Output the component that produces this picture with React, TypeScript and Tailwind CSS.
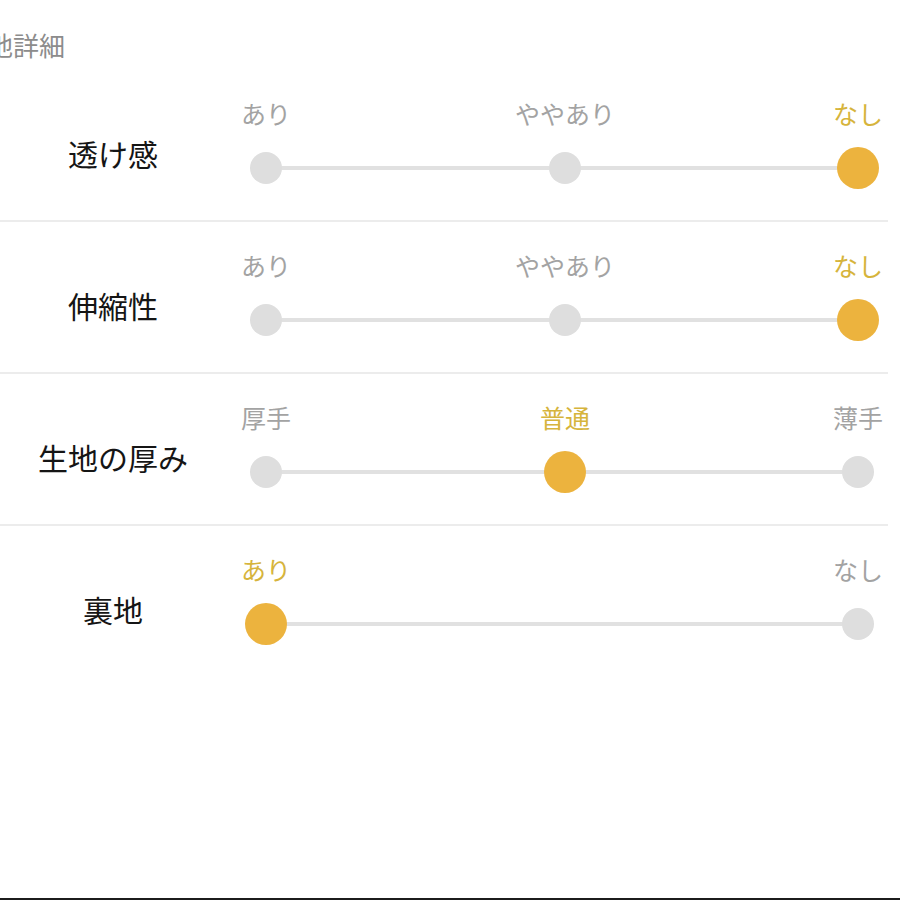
import React from "react";

type Row = { label: string; options: string[]; active: number };

const rows: Row[] = [
  { label: "透け感", options: ["あり", "ややあり", "なし"], active: 2 },
  { label: "伸縮性", options: ["あり", "ややあり", "なし"], active: 2 },
  { label: "生地の厚み", options: ["厚手", "普通", "薄手"], active: 1 },
  { label: "裏地", options: ["あり", "なし"], active: 0 },
];

const font = { fontFamily: '"Noto Sans CJK JP", "Noto Sans", sans-serif' };

function SliderRow({ row, last }: { row: Row; last: boolean }) {
  return (
    <div className={"flex h-[152px] w-[888px] " + (last ? "" : "border-b-2 border-[#ececec]")}>
      <div className="w-[226px] shrink-0 pt-[64px] text-center text-[30px] leading-[38px] text-[#151515]">
        {row.label}
      </div>
      <div className="relative ml-[10px] flex flex-1 justify-between pt-[27px]">
        <div className="absolute left-[30px] right-[30px] top-[96px] h-[4px] bg-[#e1e1e1]" />
        {row.options.map((opt, i) => {
          const on = i === row.active;
          const mid = i > 0 && i < row.options.length - 1;
          return (
            <div
              key={i}
              className={"relative z-10 flex w-[60px] flex-col items-center " + (mid ? "translate-x-[3px]" : "")}
            >
              <div
                className={
                  "whitespace-nowrap text-[25px] leading-[32px] " +
                  (on ? "text-[#d6b43c]" : "text-[#a3a3a3]")
                }
              >
                {opt}
              </div>
              <div className="mt-[17px] flex h-[44px] w-full items-center justify-center">
                {on ? (
                  <div className="h-[42px] w-[42px] rounded-full bg-[#ecb33e]" />
                ) : (
                  <div className="h-[32px] w-[32px] rounded-full bg-[#dedede]" />
                )}
              </div>
            </div>
          );
        })}
      </div>
    </div>
  );
}

export default function App() {
  return (
    <div
      className="relative h-[900px] w-[900px] overflow-hidden border-b-2 border-[#1c1c1c] bg-white"
      style={font}
    >
      <div className="h-[70px] pt-[28px]">
        <div className="-ml-[39px] whitespace-nowrap text-[26px] leading-[34px] text-[#8c8c8c]">生地詳細</div>
      </div>
      {rows.map((r, i) => (
        <SliderRow key={i} row={r} last={i === rows.length - 1} />
      ))}
    </div>
  );
}
